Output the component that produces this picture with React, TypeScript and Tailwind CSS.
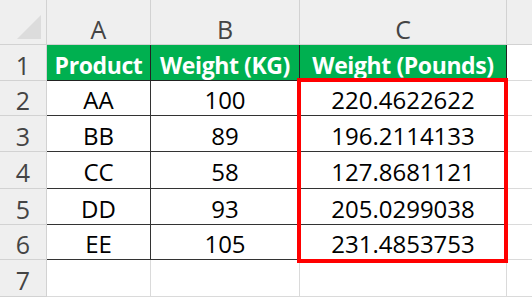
import React from "react";

const rows = [
  ["AA", "100", "220.4622622"],
  ["BB", "89", "196.2114133"],
  ["CC", "58", "127.8681121"],
  ["DD", "93", "205.0299038"],
  ["EE", "105", "231.4853753"],
];

const headCell =
  "flex items-center justify-center bg-[#efefef] border-r border-b border-[#d2d2d2] text-[#444] text-[25px] pt-[15px]";
const rowNum =
  "flex items-center justify-center bg-[#efefef] border-r border-b border-[#d2d2d2] text-[#444] text-[25px] pt-[5px]";
const dataCell =
  "flex items-center justify-center border-r border-b border-[#333] text-black text-[24px] pt-[4px]";
const greenCell =
  "flex items-center justify-center bg-[#00b050] border-r border-b border-[#222] text-white font-bold text-[23px] tracking-[-0.4px] pt-[5px]";
const emptyCell = "border-r border-b border-[#dadada]";
const sideCell = "border-b border-[#dadada]";

const App = () => {
  return (
    <div
      className="relative w-[532px] h-[298px] overflow-hidden bg-white"
      style={{ fontFamily: '"Open Sans", "Noto Sans", sans-serif' }}
    >
      <div className="grid grid-cols-[47px_104px_149px_207px_25px] grid-rows-[45px_36px_35px_36px_37px_36px_35px_37px] leading-none">
        <div className="relative bg-[#efefef] border-r border-b border-[#d2d2d2]">
          <div className="absolute right-[5px] bottom-[5px] w-0 h-0 border-l-[24px] border-l-transparent border-b-[24px] border-b-[#dcdcdc]" />
        </div>
        <div className={headCell}>A</div>
        <div className={headCell}>B</div>
        <div className={headCell}>C</div>
        <div className="bg-[#efefef] border-b border-[#d2d2d2]" />

        <div className={rowNum}>1</div>
        <div className={greenCell}>Product</div>
        <div className={greenCell}>Weight (KG)</div>
        <div className={greenCell}>Weight (Pounds)</div>
        <div className={sideCell} />

        {rows.map((r, i) => (
          <React.Fragment key={r[0]}>
            <div className={rowNum}>{i + 2}</div>
            <div className={dataCell}>{r[0]}</div>
            <div className={dataCell}>{r[1]}</div>
            <div className={dataCell}>{r[2]}</div>
            <div className={sideCell} />
          </React.Fragment>
        ))}

        <div className={rowNum}>7</div>
        <div className={emptyCell} />
        <div className={emptyCell} />
        <div className={emptyCell} />
        <div className={sideCell} />
      </div>

      <div className="absolute left-[297px] top-[78px] w-[211px] h-[185px] border-[4px] border-[#ff0000]" />
    </div>
  );
};

export default App;
